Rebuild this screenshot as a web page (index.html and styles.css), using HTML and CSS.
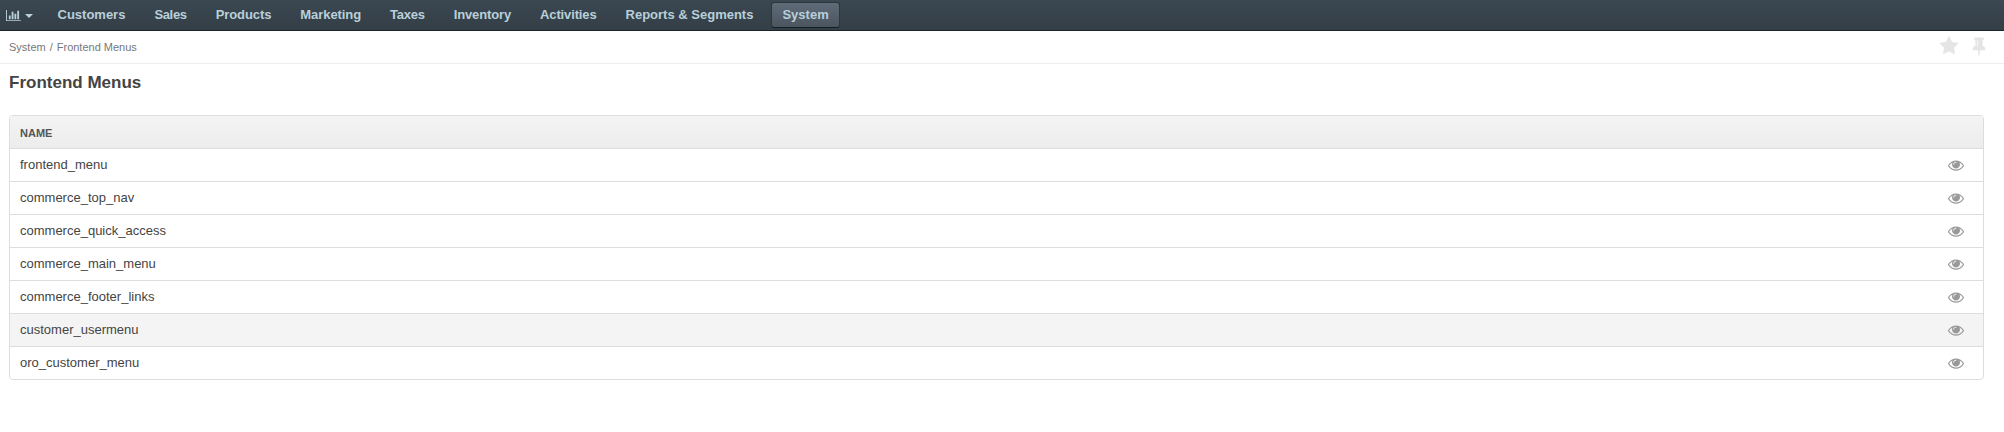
FILE: index.html
```html
<!DOCTYPE html>
<html lang="en">
<head>
<meta charset="utf-8">
<title>Frontend Menus</title>
<link rel="stylesheet" href="styles.css">
</head>
<body>
<svg class="defs" width="0" height="0">
  <symbol id="eye" viewBox="0 0 1792 1792"><path d="M1664 960q-152-236-381-353 61 104 61 225 0 185-131.500 316.500t-316.500 131.500-316.500-131.500-131.500-316.500q0-121 61-225-229 117-381 353 133 205 333.500 326.500t434.500 121.500 434.500-121.500 333.500-326.500zm-720-384q0-20-14-34t-34-14q-125 0-214.500 89.500t-89.500 214.500q0 20 14 34t34 14 34-14 14-34q0-86 61-147t147-61q20 0 34-14t14-34zm848 384q0 34-20 69-140 230-376.500 368.500t-499.500 138.500-499.500-139-376.500-368q-20-35-20-69t20-69q140-229 376.500-368t499.500-139 499.500 139 376.500 368q20 35 20 69z"/></symbol>
</svg>
<nav class="navbar">
  <div class="dashboard">
    <svg class="chart" viewBox="0 0 2048 1792"><path d="M640 896v512h-256v-512h256zm384-512v1024h-256v-1024h256zm1024 1152v128h-2048v-1536h128v1408h1920zm-640-896v768h-256v-768h256zm384-384v1152h-256v-1152h256z"/></svg>
    <span class="caret"></span>
  </div>
  <ul class="menu">
    <li class="item">Customers</li>
    <li class="item">Sales</li>
    <li class="item">Products</li>
    <li class="item">Marketing</li>
    <li class="item">Taxes</li>
    <li class="item">Inventory</li>
    <li class="item">Activities</li>
    <li class="item">Reports &amp; Segments</li>
    <li class="item active">System</li>
  </ul>
</nav>
<div class="topbar">
  <div class="breadcrumb"><span>System</span><span>/</span><span>Frontend Menus</span></div>
  <div class="actions">
    <svg viewBox="0 0 1792 1792"><path d="M1728 647q0 22-26 48l-363 354 86 500q1 7 1 20 0 21-10.500 35.500t-30.500 14.500q-19 0-40-12l-449-236-449 236q-22 12-40 12-21 0-31.500-14.500t-10.500-35.500q0-6 2-20l86-500-364-354q-25-27-25-48 0-37 56-46l502-73 225-455q19-41 49-41t49 41l225 455 502 73q56 9 56 46z"/></svg>
    <svg viewBox="0 0 1792 1792"><path d="M800 864v-448q0-14-9-23t-23-9-23 9-9 23v448q0 14 9 23t23 9 23-9 9-23zm672 352q0 26-19 45t-45 19h-429l-51 483q-2 12-10.500 20.500t-20.500 8.500h-1q-27 0-32-27l-76-485h-404q-26 0-45-19t-19-45q0-123 78.500-221.500t177.500-98.500v-512q-52 0-90-38t-38-90 38-90 90-38h640q52 0 90 38t38 90-38 90-90 38v512q99 0 177.500 98.500t78.500 221.500z"/></svg>
  </div>
</div>
<h1 class="title">Frontend Menus</h1>
<div class="grid">
  <div class="head">NAME</div>
  <div class="row"><span>frontend_menu</span><svg class="eye"><use href="#eye"/></svg></div>
  <div class="row"><span>commerce_top_nav</span><svg class="eye"><use href="#eye"/></svg></div>
  <div class="row"><span>commerce_quick_access</span><svg class="eye"><use href="#eye"/></svg></div>
  <div class="row"><span>commerce_main_menu</span><svg class="eye"><use href="#eye"/></svg></div>
  <div class="row"><span>commerce_footer_links</span><svg class="eye"><use href="#eye"/></svg></div>
  <div class="row hover"><span>customer_usermenu</span><svg class="eye"><use href="#eye"/></svg></div>
  <div class="row"><span>oro_customer_menu</span><svg class="eye"><use href="#eye"/></svg></div>
</div>
</body>
</html>
```
FILE: styles.css
```css
* { box-sizing: border-box; }
body {
  margin: 0;
  background: #fff;
  color: #444;
  font: 13px/20px "Liberation Sans", Arial, sans-serif;
}
svg { display: block; fill: currentColor; }
.defs { display: none; }
.navbar {
  display: flex;
  height: 31px;
  background: linear-gradient(#3c4851, #333e47);
  border-bottom: 1px solid #1b232c;
  color: #b9cfd9;
}
.dashboard { display: flex; width: 46.5px; padding: 9px 0 0 6px; gap: 4px; }
.chart { width: 15px; height: 13px; }
.caret {
  width: 0;
  height: 0;
  margin-top: 5px;
  border: 4px solid transparent;
  border-top-color: currentColor;
  border-bottom: 0;
}
.menu { display: flex; gap: 7px; margin: 0; padding: 2px 0 0; list-style: none; }
.item {
  height: 26px;
  padding: 2px 10px 0;
  border: 1px solid transparent;
  border-radius: 3px;
  font-weight: bold;
}
.item:nth-child(2) { letter-spacing: -0.35px; }
.item:nth-child(3), .item:nth-child(4) { letter-spacing: -0.08px; }
.item:nth-child(5) { letter-spacing: -0.25px; }
.item:nth-child(6), .item:nth-child(7) { letter-spacing: -0.13px; }
.active {
  background: linear-gradient(#5f6b77, #4a5560);
  border-color: #2c363f;
  border-bottom-color: #151c23;
}
.topbar {
  display: flex;
  justify-content: space-between;
  height: 33px;
  padding: 0 15px 0 9px;
  border-bottom: 1px solid #eee;
}
.breadcrumb { display: flex; gap: 4px; padding-top: 6px; color: #777; font-size: 11px; }
.actions { display: flex; gap: 10px; padding-top: 5px; color: #e5e5e5; }
.actions svg { width: 20px; height: 20px; }
.title { margin: 8px 0 0 9px; font-size: 17px; line-height: 21px; }
.grid {
  margin: 22px 20px 0 9px;
  border: 1px solid #ddd;
  border-radius: 4px;
  overflow: hidden;
}
.head {
  height: 32px;
  padding: 7px 10px 0;
  background: linear-gradient(#f4f4f4, #ececec);
  color: #555;
  font-size: 11px;
  font-weight: bold;
}
.row {
  display: flex;
  justify-content: space-between;
  height: 33px;
  padding: 6px 19px 0 10px;
  border-top: 1px solid #ddd;
}
.hover { background: #f4f4f4; }
.eye { width: 16px; height: 16px; margin-top: 2px; color: #999; }
```
